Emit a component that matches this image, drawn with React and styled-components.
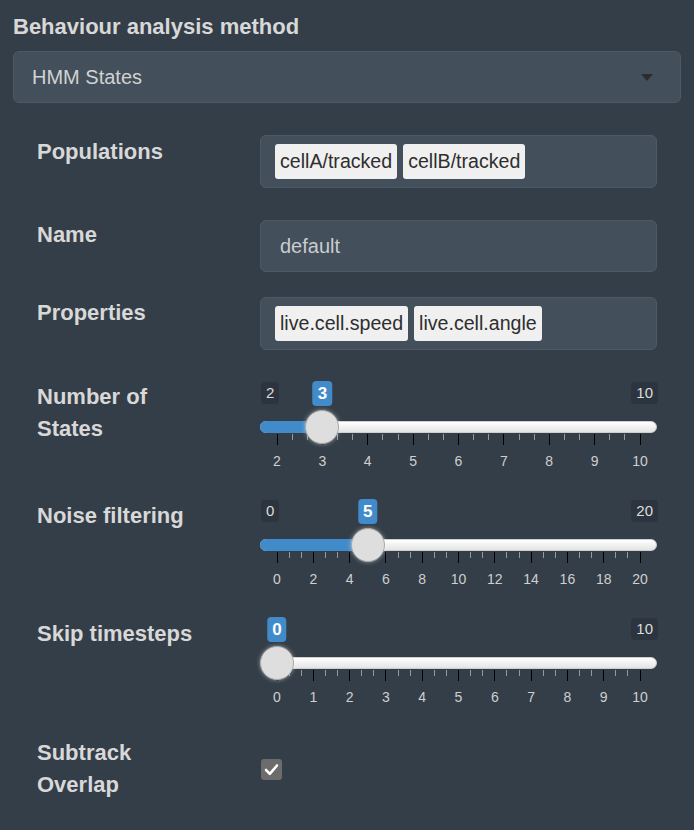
import styled, { createGlobalStyle } from 'styled-components';

const GlobalStyle = createGlobalStyle`
    body {
        margin: 0;
        background: #343e48;
        font-family: "Liberation Sans", Arial, sans-serif;
    }
`;

const Page = styled.div`
    padding: 14px 13px 20px;
`;

const Title = styled.div`
    color: #d8d8d8;
    font-size: 22px;
    font-weight: 700;
    line-height: 26px;
    margin-bottom: 11px;
`;

const Select = styled.div`
    height: 52px;
    box-sizing: border-box;
    display: flex;
    align-items: center;
    justify-content: space-between;
    padding: 0 27px 0 18px;
    background: #434f5a;
    border: 1px solid #4d5964;
    border-radius: 6px;
    color: #d2d2d2;
    font-size: 20px;
`;

const Caret = styled.span`
    width: 0;
    height: 0;
    border-left: 6.5px solid transparent;
    border-right: 6.5px solid transparent;
    border-top: 7px solid #2c2c2c;
`;

const Form = styled.div`
    padding: 32px 24px 0;
`;

const Row = styled.div`
    display: grid;
    grid-template-columns: 223px 1fr;
    align-items: ${p => (p.$center ? 'center' : 'start')};
    margin-top: ${p => p.$mt || 0}px;
`;

const Label = styled.div`
    color: #d8d8d8;
    font-size: 22px;
    font-weight: 700;
    line-height: 32px;
    margin-top: ${p => p.$off || 0}px;
`;

const InputBox = styled.div`
    box-sizing: border-box;
    height: ${p => p.$h || 52}px;
    display: flex;
    align-items: center;
    gap: 6px;
    padding: ${p => (p.$tags ? '0 14px' : '0 19px')};
    background: #434f5a;
    border: 1px solid #4d5964;
    border-radius: 6px;
    color: #c9cdd1;
    font-size: 20px;
`;

const Tag = styled.span`
    height: 35px;
    display: flex;
    align-items: center;
    padding: 0 5px;
    background: #f0f0f0;
    border-radius: 3px;
    color: #2e2e2e;
    font-size: 19.6px;
`;

const SliderWrap = styled.div`
    position: relative;
    height: 90px;
`;

const EdgeLabel = styled.span`
    position: absolute;
    top: 0;
    ${p => (p.$right ? 'right: -1px;' : 'left: 1px;')}
    height: 22px;
    line-height: 22px;
    padding: 0 5px;
    background: #2c353f;
    border-radius: 4px;
    color: #dcdcdc;
    font-size: 15px;
`;

const ValueLabel = styled.span`
    position: absolute;
    top: -1px;
    transform: translateX(-50%);
    height: 25px;
    line-height: 25px;
    padding: 0 5px;
    background: #428bca;
    border-radius: 4px;
    color: #fff;
    font-size: 17px;
    font-weight: 700;
`;

const Track = styled.div`
    position: absolute;
    top: 39px;
    left: 0;
    right: 0;
    height: 12px;
    box-sizing: border-box;
    border: 1px solid #cfcfcf;
    border-radius: 7px;
    background: linear-gradient(to bottom, #ffffff, #e4e4e4);
`;

const Bar = styled.div`
    position: absolute;
    top: 39px;
    left: 0;
    height: 12px;
    background: #428bca;
    border-radius: 7px 0 0 7px;
`;

const Handle = styled.div`
    position: absolute;
    top: 28px;
    width: 34px;
    height: 34px;
    box-sizing: border-box;
    transform: translateX(-50%);
    border-radius: 50%;
    background: #dedede;
    border: 1px solid #a9a9a9;
    box-shadow: 0 0 4px rgba(255, 255, 255, 0.45);
    z-index: 2;
`;

const Tick = styled.span`
    position: absolute;
    top: 52px;
    width: 1px;
    height: ${p => (p.$major ? 11 : 6)}px;
    background: ${p => (p.$major ? '#000' : '#999')};
`;

const TickText = styled.span`
    position: absolute;
    top: 70px;
    transform: translateX(-50%);
    color: #cfcfcf;
    font-size: 14px;
    line-height: 18px;
`;

const PAD = 17;
const SPAN = 363;

const Slider = ({ min, max, value, step }) => {
    const pos = v => PAD + ((v - min) / (max - min)) * SPAN;
    const majors = [];
    for (let v = min; v <= max; v += step) majors.push(v);
    const minors = [];
    majors.slice(0, -1).forEach(v => {
        minors.push(v + step / 3, v + (2 * step) / 3);
    });
    const x = pos(value);
    return (
        <SliderWrap>
            {x - 12 > 30 && <EdgeLabel>{min}</EdgeLabel>}
            <EdgeLabel $right>{max}</EdgeLabel>
            <ValueLabel style={{ left: x }}>{value}</ValueLabel>
            <Track />
            {value > min && <Bar style={{ width: x }} />}
            {majors.map(v => (
                <Tick key={'M' + v} $major style={{ left: pos(v) - 0.5 }} />
            ))}
            {minors.map(v => (
                <Tick key={'m' + v} style={{ left: pos(v) - 0.5 }} />
            ))}
            {majors.map(v => (
                <TickText key={'t' + v} style={{ left: pos(v) }}>{v}</TickText>
            ))}
            <Handle style={{ left: x }} />
        </SliderWrap>
    );
};

const Check = styled.span`
    width: 21px;
    height: 21px;
    display: flex;
    align-items: center;
    justify-content: center;
    margin-left: 1px;
    background: #6c6c6c;
    border-radius: 3px;
`;

const App = () => {
    return (
        <Page>
            <GlobalStyle />
            <Title>Behaviour analysis method</Title>
            <Select>
                HMM States
                <Caret />
            </Select>
            <Form>
                <Row>
                    <Label $off={1}>Populations</Label>
                    <InputBox $tags $h={53}>
                        <Tag>cellA/tracked</Tag>
                        <Tag>cellB/tracked</Tag>
                    </InputBox>
                </Row>
                <Row $mt={32}>
                    <Label $off={-1}>Name</Label>
                    <InputBox>default</InputBox>
                </Row>
                <Row $mt={25}>
                    <Label>Properties</Label>
                    <InputBox $tags $h={53}>
                        <Tag>live.cell.speed</Tag>
                        <Tag>live.cell.angle</Tag>
                    </InputBox>
                </Row>
                <Row $mt={32}>
                    <Label $off={-1}>Number of<br />States</Label>
                    <Slider min={2} max={10} value={3} step={1} />
                </Row>
                <Row $mt={28}>
                    <Label>Noise filtering</Label>
                    <Slider min={0} max={20} value={5} step={2} />
                </Row>
                <Row $mt={28}>
                    <Label>Skip timesteps</Label>
                    <Slider min={0} max={10} value={0} step={1} />
                </Row>
                <Row $mt={29} $center>
                    <Label>Subtrack<br />Overlap</Label>
                    <Check>
                        <svg width="15" height="13" viewBox="0 0 15 13">
                            <path d="M2 7 L5.8 10.8 L13 2.5" fill="none" stroke="#fff" strokeWidth="2.6" strokeLinecap="round" strokeLinejoin="round" />
                        </svg>
                    </Check>
                </Row>
            </Form>
        </Page>
    );
};

export default App;
